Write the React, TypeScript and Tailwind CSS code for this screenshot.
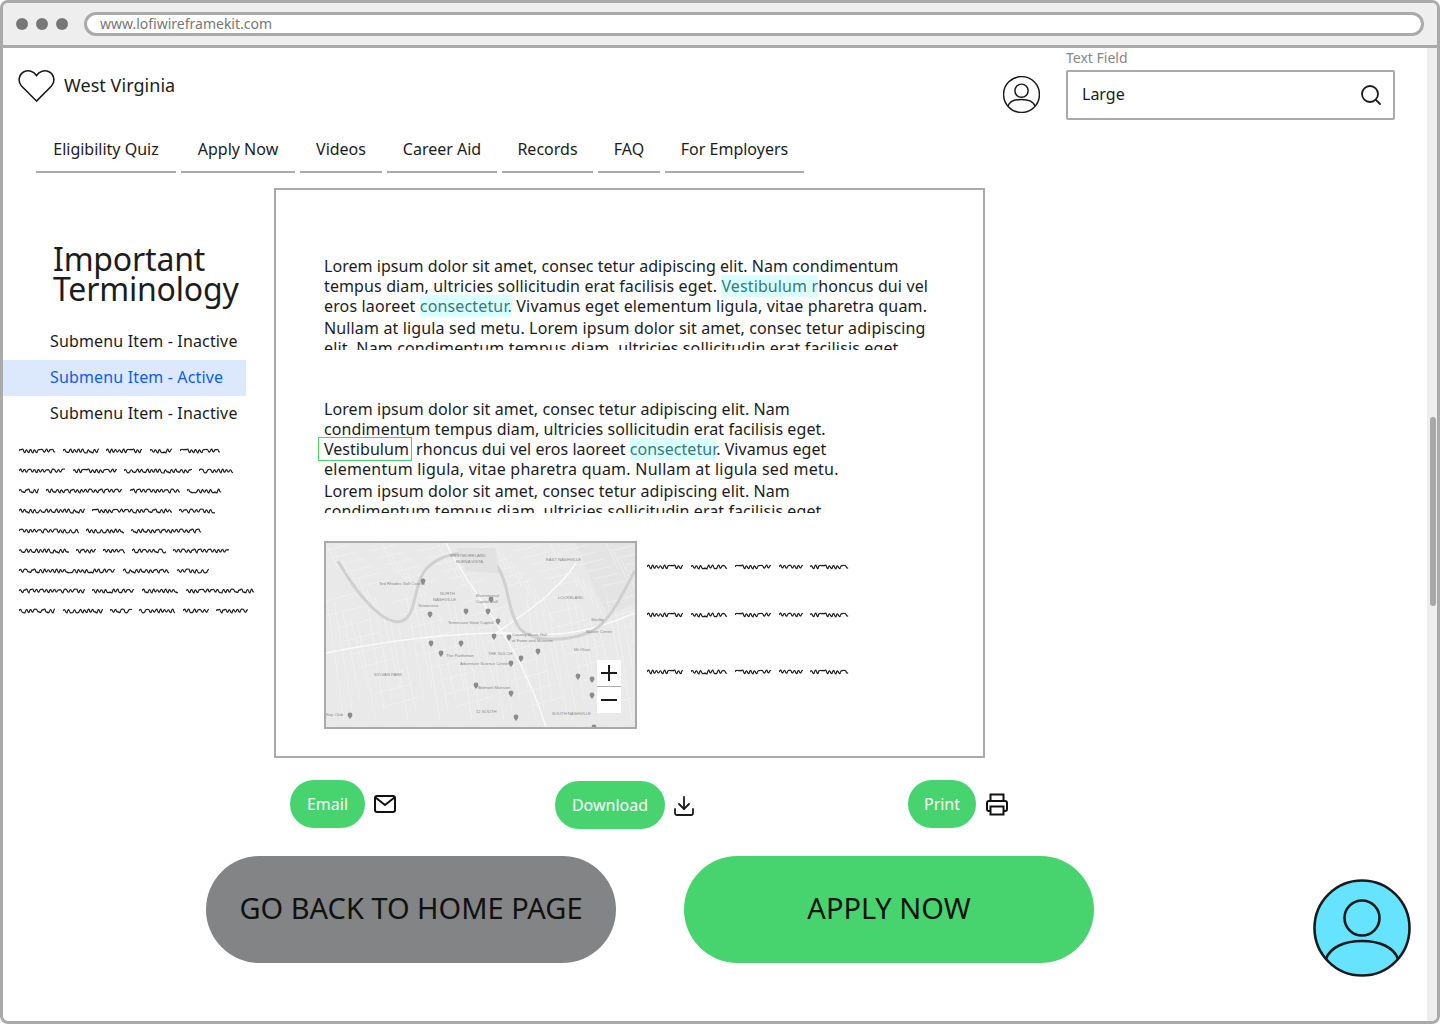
import React from 'react';
import { Search, Download } from 'lucide-react';

const FONT = "font-['Noto_Sans',sans-serif]";

// word widths of the scribbled placeholder copy
const SIDE_LINES = [
  [37, 36, 37, 23, 40],
  [47, 44, 68, 35],
  [20, 77, 50, 35],
  [66, 80, 36],
  [60, 38, 71],
  [50, 20, 22, 34, 56],
  [97, 47, 32],
  [66, 43, 37, 68],
  [37, 40, 22, 37, 26, 32],
];
const CAPTION_LINE = [37, 37, 37, 24, 39];

const NAV = [
  { label: 'Eligibility Quiz', width: 'w-[140px]' },
  { label: 'Apply Now', width: 'w-[114px]' },
  { label: 'Videos', width: 'w-[82px]' },
  { label: 'Career Aid', width: 'w-[110px]' },
  { label: 'Records', width: 'w-[91px]' },
  { label: 'FAQ', width: 'w-[62px]' },
  { label: 'For Employers', width: 'w-[139px]' },
];

const Squiggle: React.FC<{ width: number; seed: number }> = ({ width, seed }) => {
  let d = 'M0 4';
  let s = seed * 7 + 3;
  let up = true;
  for (let x = 2; x <= width; x += 2) {
    s = (s * 31 + 11) % 97;
    const y = up ? 2.2 + (s % 4) * 0.35 : 4.6 + (s % 4) * 0.45;
    const px = x - 1;
    d += ` Q${px} ${up ? 1.8 : 6} ${x} ${y.toFixed(1)}`;
    up = s % 5 === 0 ? up : !up;
  }
  return (
    <svg width={width} height={8} className="block shrink-0">
      <path d={d} fill="none" stroke="#1c1c1c" strokeWidth="1.15" />
    </svg>
  );
};

const ScribbleLine: React.FC<{ words: number[]; seed: number }> = ({ words, seed }) => (
  <div className="flex gap-[7px] items-center">
    {words.map((w, i) => (
      <Squiggle key={i} width={w} seed={seed + i} />
    ))}
  </div>
);

const UserGlyph: React.FC<{ size: number; fill?: string; strokeWidth?: number }> = ({ size, fill = 'none', strokeWidth = 1.5 }) => (
  <svg width={size} height={size} viewBox="0 0 98 98">
    <circle cx="49" cy="49" r="47.5" fill={fill} stroke="#1a1a1a" strokeWidth={strokeWidth * 2.6} />
    <circle cx="49" cy="39" r="17.5" fill="none" stroke="#1a1a1a" strokeWidth={strokeWidth * 2.6} />
    <path d="M13 80 C17 68 32 62 49 62 C66 62 81 68 85 80" fill="none" stroke="#1a1a1a" strokeWidth={strokeWidth * 2.6} />
  </svg>
);

const MailIcon = () => (
  <svg width="22" height="18" viewBox="0 0 22 18" fill="none" stroke="#111" strokeWidth="2">
    <rect x="1" y="1" width="20" height="16" rx="2" />
    <path d="M1.5 2.5 L11 10 L20.5 2.5" />
  </svg>
);

const PrinterIcon = () => (
  <svg width="22" height="23" viewBox="0 0 22 23" fill="none" stroke="#111" strokeWidth="2">
    <path d="M4.5 8 V1.5 H17.5 V8" />
    <path d="M4.5 18 H3 C1.9 18 1 17.1 1 16 V10 C1 8.9 1.9 8 3 8 H19 C20.1 8 21 8.9 21 10 V16 C21 17.1 20.1 18 19 18 H17.5" />
    <rect x="4.5" y="13.5" width="13" height="8" />
  </svg>
);

const Pin: React.FC<{ x: number; y: number }> = ({ x, y }) => (
  <path d={`M${x} ${y} c-1.4 -2 -2.4 -2.8 -2.4 -4.2 a2.4 2.4 0 1 1 4.8 0 c0 1.4 -1 2.2 -2.4 4.2 z`} fill="#8c8c8c" />
);

const MapPicture: React.FC = () => {
  const streets: string[] = [];
  for (let i = 0; i < 40; i++) {
    const x = i * 8;
    streets.push(`M${x} ${50 + (i % 5) * 8} L${x + 18} ${178 - (i % 4) * 11}`);
    streets.push(`M${x - 8} ${60 + (i % 9) * 13} L${x + 30} ${50 + (i % 9) * 13}`);
    streets.push(`M${x} ${(i % 7) * 9} L${x + 12} ${26 + (i % 7) * 9}`);
    streets.push(`M${x - 4} ${(i % 6) * 7 + 8} L${x + 22} ${(i % 6) * 7 + 2}`);
  }
  const pins = [
    [97, 42], [104, 75], [165, 60], [162, 72], [172, 82], [135, 104], [168, 97], [183, 98], [115, 114], [185, 124], [150, 146],
    [212, 112], [195, 119], [252, 137], [266, 140], [266, 156], [185, 154], [190, 178], [24, 176], [268, 188], [140, 72], [105, 104],
  ];
  const labels: [number, number, string][] = [
    [124, 14, 'WESTMORELAND'],
    [130, 20, 'BUENA VISTA'],
    [220, 18, 'EAST NASHVILLE'],
    [53, 42, 'Ted Rhodes Golf Course'],
    [114, 52, 'NORTH'],
    [107, 58, 'NASHVILLE'],
    [150, 54, 'Bicentennial'],
    [150, 60, 'Capitol Mall'],
    [92, 64, 'Tennessee'],
    [122, 81, 'Tennessee State Capitol'],
    [186, 93, 'Country Music Hall'],
    [186, 99, 'of Fame and Museum'],
    [232, 56, 'LOCKELAND'],
    [265, 78, 'Shelby'],
    [260, 90, 'Nature Center'],
    [120, 114, 'The Parthenon'],
    [162, 112, 'THE GULCH'],
    [134, 122, 'Adventure Science Center'],
    [48, 133, 'SYLVAN PARK'],
    [152, 146, 'Belmont Mansion'],
    [150, 170, '12 SOUTH'],
    [226, 172, 'SOUTH NASHVILLE'],
    [248, 108, 'Mt Olivet'],
    [0, 173, 'Key Club'],
  ];
  return (
    <svg viewBox="0 0 309 184" width={309} height={184} className="block">
      <rect width="309" height="184" fill="#e9e9e9" />
      <path d="M250 0 L309 0 L309 60 L280 75 L262 30 Z" fill="#e4e4e4" />
      <g fill="none" stroke="#f4f4f4" strokeWidth="0.6">
        {streets.map((d, i) => (
          <path key={i} d={d} />
        ))}
      </g>
      <path d="M0 110 C70 96 130 90 180 90 C220 92 250 96 309 70" fill="none" stroke="#fafafa" strokeWidth="1.6" />
      <path d="M120 0 C150 60 190 90 220 184" fill="none" stroke="#fafafa" strokeWidth="1.4" />
      <path d="M170 90 C200 70 230 50 250 20" fill="none" stroke="#fafafa" strokeWidth="1.4" />
      <path d="M12 18 C30 50 58 84 76 78 C92 72 86 40 102 24 C122 6 158 6 170 22 C184 40 180 66 194 86 C208 100 240 98 262 90 C284 82 296 50 309 28" fill="none" stroke="#d0d0d0" strokeWidth="3" />
      <path d="M130 5 L170 5 L172 30 L140 28 Z" fill="#e2e2e2" />
      {pins.map(([x, y], i) => (
        <Pin key={i} x={x} y={y} />
      ))}
      <g fill="#8a8a8a" fontSize="4.2" fontFamily="'Liberation Sans', sans-serif">
        {labels.map(([x, y, t]) => (
          <text key={t} x={x} y={y}>{t}</text>
        ))}
      </g>
    </svg>
  );
};

const ActionPill: React.FC<{ label: string; className: string }> = ({ label, className }) => (
  <button className={`h-12 rounded-full bg-[#47d46f] text-white text-base flex items-center justify-center shrink-0 ${className}`}>
    {label}
  </button>
);

const SubmenuRow: React.FC<{ label: string; active?: boolean }> = ({ label, active }) => (
  <div className={`h-9 flex items-center pl-[48px] pb-[2px] w-[244px] whitespace-nowrap text-base tracking-[0.15px] ${active ? 'bg-[#dce8fc] text-[#0f5cf0]' : ''}`}>
    {label}
  </div>
);

export default function App() {
  return (
    <div className={`relative w-[1440px] h-[1024px] overflow-hidden bg-white border-[3px] border-[#aaaaaa] rounded-[8px] flex flex-col text-[#1c1c1c] ${FONT}`}>
      {/* Browser chrome */}
      <div className="h-[45px] shrink-0 bg-[#eeeeee] border-b-[3px] border-[#aaaaaa] flex items-center px-[13px]">
        <div className="flex gap-2">
          <span className="w-3 h-3 rounded-full bg-[#777777]" />
          <span className="w-3 h-3 rounded-full bg-[#777777]" />
          <span className="w-3 h-3 rounded-full bg-[#777777]" />
        </div>
        <div className="ml-[16px] flex-1 h-6 bg-white border-[3px] border-[#aaaaaa] rounded-full flex items-center pl-[13px] text-sm leading-none text-[#777777]">
          www.lofiwireframekit.com
        </div>
      </div>

      <div className="flex-1 flex min-h-0">
        <div className="flex-1 min-w-0 flex flex-col">
          {/* Header */}
          <div className="h-[75px] shrink-0 flex pl-[15px] pr-[32px]">
            <div className="flex items-center gap-[9px] h-[46px] mt-[14px]">
              <svg width="37" height="34" viewBox="0 0 37 34" fill="none" stroke="#1a1a1a" strokeWidth="1.6" className="mt-[1px]">
                <path d="M18.5 32 L3.5 17 C-0.5 12.5 0.8 5.5 6 2.8 C10.5 0.6 15.8 2.2 18.5 6.5 C21.2 2.2 26.5 0.6 31 2.8 C36.2 5.5 37.5 12.5 33.5 17 Z" />
              </svg>
              <span className="text-lg leading-none tracking-[0.05px]">West Virginia</span>
            </div>
            <div className="ml-auto mt-[28px]">
              <UserGlyph size={37} />
            </div>
            <div className="ml-[26px] mt-[2px] w-[329px]">
              <div className="text-sm leading-[16px] text-[#888888]">Text Field</div>
              <div className="mt-[4px] h-[50px] border-2 border-[#aaaaaa] rounded-[2px] flex items-center justify-between pl-[14px] pr-[10px]">
                <span className="text-base pb-[2px]">Large</span>
                <Search size={24} strokeWidth={1.8} className="text-[#1a1a1a]" />
              </div>
            </div>
          </div>

          {/* Nav tabs */}
          <div className="mt-[2px] ml-[33px] flex gap-[5px]">
            {NAV.map((item) => (
              <div key={item.label} className={`h-[48px] pt-[1px] border-b-2 border-[#aaaaaa] flex items-center justify-center text-base leading-none whitespace-nowrap ${item.width}`}>
                {item.label}
              </div>
            ))}
          </div>

          <div className="flex mt-[15px]">
            {/* Sidebar */}
            <div className="w-[271px] shrink-0 pt-[56px]">
              <h1 className="pl-[50px] text-[32px] leading-[30px] font-normal tracking-[-0.2px]">
                Important
                <br />
                Terminology
              </h1>
              <div className="mt-[20px] -ml-px">
                <SubmenuRow label="Submenu Item - Inactive" />
                <SubmenuRow label="Submenu Item - Active" active />
                <SubmenuRow label="Submenu Item - Inactive" />
              </div>
              <div className="mt-[15px] pl-[16px] flex flex-col gap-[12px]">
                {SIDE_LINES.map((l, i) => (
                  <ScribbleLine key={i} words={l} seed={i * 5 + 1} />
                ))}
              </div>
            </div>

            {/* Content card */}
            <div className="w-[711px] h-[570px] shrink-0 border-2 border-[#aaaaaa] pl-[48px] pt-[66px] text-base">
              <div className="h-[94px] overflow-hidden w-[620px] leading-[20px] tracking-[0.05px]">
                <div className="whitespace-nowrap">Lorem ipsum dolor sit amet, consec tetur adipiscing elit. Nam condimentum</div>
                <div className="whitespace-nowrap tracking-[0.12px]">
                  tempus diam, ultricies sollicitudin erat facilisis eget.{' '}
                  <span className="bg-[#d9ffff] text-[#3a7a78]">Vestibulum r</span>honcus dui vel
                </div>
                <div className="whitespace-nowrap tracking-[0.15px]">
                  eros laoreet <span className="bg-[#d9ffff] text-[#3a7a78]">consectetur.</span> Vivamus eget elementum ligula, vitae pharetra quam.
                </div>
                <div className="whitespace-nowrap mt-[2px] tracking-[0.14px]">Nullam at ligula sed metu. Lorem ipsum dolor sit amet, consec tetur adipiscing</div>
                <div className="whitespace-nowrap tracking-[0.14px]">elit. Nam condimentum tempus diam, ultricies sollicitudin erat facilisis eget.</div>
              </div>
              <div className="mt-[49px] h-[114px] overflow-hidden w-[628px] -ml-[8px] pl-[8px] leading-[20px] tracking-[0.08px]">
                <div className="whitespace-nowrap">Lorem ipsum dolor sit amet, consec tetur adipiscing elit. Nam</div>
                <div className="whitespace-nowrap">condimentum tempus diam, ultricies sollicitudin erat facilisis eget.</div>
                <div className="whitespace-nowrap tracking-[0.03px]">
                  <span className="inline-block h-[24px] -my-[2px] -ml-[6px] pl-[5px] pr-[2px] leading-[23px] border border-[#47d46f] align-top">Vestibulum</span> rhoncus dui vel eros laoreet{' '}
                  <span className="bg-[#d9ffff] text-[#3a7a78]">consectetur</span>. Vivamus eget
                </div>
                <div className="whitespace-nowrap tracking-[0.24px]">elementum ligula, vitae pharetra quam. Nullam at ligula sed metu.</div>
                <div className="whitespace-nowrap mt-[2px]">Lorem ipsum dolor sit amet, consec tetur adipiscing elit. Nam</div>
                <div className="whitespace-nowrap">condimentum tempus diam, ultricies sollicitudin erat facilisis eget.</div>
              </div>
              <div className="mt-[28px] flex">
                <div className="relative w-[313px] h-[188px] border-2 border-[#aaaaaa] shrink-0">
                  <MapPicture />
                  <div className="absolute left-[271px] top-[117px] w-6 h-[53px] bg-white flex flex-col items-center text-[#1a1a1a]">
                    <svg width="24" height="26" viewBox="0 0 24 26" stroke="#1a1a1a" strokeWidth="2"><path d="M4 13H20M12 5V21" /></svg>
                    <div className="w-full h-px bg-[#aaaaaa]" />
                    <svg width="24" height="26" viewBox="0 0 24 26" stroke="#1a1a1a" strokeWidth="2"><path d="M4 13H20" /></svg>
                  </div>
                </div>
                <div className="ml-[10px] pt-[22px] flex flex-col">
                  <ScribbleLine words={CAPTION_LINE} seed={3} />
                  <div className="mt-[40px]"><ScribbleLine words={CAPTION_LINE} seed={3} /></div>
                  <div className="mt-[49px]"><ScribbleLine words={CAPTION_LINE} seed={3} /></div>
                </div>
              </div>
            </div>
          </div>

          {/* Email / download / print */}
          <div className="mt-[22px] ml-[287px] flex items-start">
            <ActionPill label="Email" className="w-[75px]" />
            <div className="ml-[9px] mt-[15px]"><MailIcon /></div>
            <ActionPill label="Download" className="ml-[159px] mt-px w-[110px]" />
            <Download size={24} strokeWidth={1.8} className="ml-[7px] mt-[14px]" />
            <ActionPill label="Print" className="ml-[212px] w-[68px]" />
            <div className="ml-[10px] mt-[13px]"><PrinterIcon /></div>
          </div>

          {/* Big CTAs */}
          <div className="mt-[27px] ml-[203px] flex gap-[68px]">
            <button className="w-[410px] h-[107px] pb-[3px] rounded-full bg-[#838485] text-[29px] text-[#111111]">GO BACK TO HOME PAGE</button>
            <button className="w-[410px] h-[107px] pb-[3px] rounded-full bg-[#47d46f] text-[29px] text-[#111111]">APPLY NOW</button>
          </div>
        </div>

        {/* Scrollbar */}
        <div className="w-[10px] shrink-0 bg-[#eeeeee] pt-[369px] pl-[3px] pr-px">
          <div className="h-[189px] w-full rounded-t-full rounded-b-full bg-[#a8a8a8]" />
        </div>
      </div>

      {/* Chat bubble */}
      <div className="absolute left-[1310px] top-[876px]">
        <UserGlyph size={98} fill="#66e3ff" strokeWidth={1} />
      </div>
    </div>
  );
}
